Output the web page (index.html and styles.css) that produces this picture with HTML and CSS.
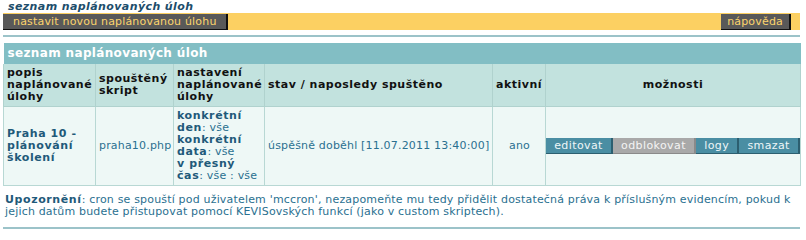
FILE: index.html
```html
<!DOCTYPE html>
<html lang="cs">
<head>
<meta charset="utf-8">
<title>seznam naplánovaných úloh</title>
<link rel="stylesheet" href="styles.css">
</head>
<body>
<h1 class="page-title">seznam naplánovaných úloh</h1>
<div class="toolbar">
  <a class="tbtn tbtn-main" href="#">nastavit novou naplánovanou úlohu</a>
  <a class="tbtn" href="#">nápověda</a>
</div>
<div class="rule rule-top"></div>
<table class="grid">
  <colgroup>
    <col class="c1"><col class="c2"><col class="c3"><col class="c4"><col class="c5"><col class="c6">
  </colgroup>
  <thead>
    <tr><th colspan="6" class="caption">seznam naplánovaných úloh</th></tr>
    <tr class="head">
      <th>popis naplánované úlohy</th>
      <th>spouštěný skript</th>
      <th>nastavení naplánované úlohy</th>
      <th>stav / naposledy spuštěno</th>
      <th>aktivní</th>
      <th class="center">možnosti</th>
    </tr>
  </thead>
  <tbody>
    <tr class="row">
      <td class="strong">Praha 10 - plánování školení</td>
      <td>praha10.php</td>
      <td><b>konkrétní den</b>: vše<br><b>konkrétní data</b>: vše<br><b>v přesný čas</b>: vše : vše</td>
      <td>úspěšně doběhl [11.07.2011 13:40:00]</td>
      <td class="center">ano</td>
      <td class="actions-cell">
        <div class="actions">
          <a class="abtn" href="#">editovat</a>
          <a class="abtn abtn-off" href="#">odblokovat</a>
          <a class="abtn" href="#">logy</a>
          <a class="abtn" href="#">smazat</a>
        </div>
      </td>
    </tr>
  </tbody>
</table>
<p class="note"><b>Upozornění</b>: cron se spouští pod uživatelem 'mccron', nezapomeňte mu tedy přidělit dostatečná práva k příslušným evidencím, pokud k jejich datům budete přistupovat pomocí KEVISovských funkcí (jako v custom skriptech).</p>
<div class="rule"></div>
</body>
</html>
```
FILE: styles.css
```css
html, body {
  margin: 0;
  padding: 0;
  background: #ffffff;
}
body {
  padding: 0 3px;
  width: 797px;
  font-family: "DejaVu Sans", Verdana, sans-serif;
  font-size: 11px;
  line-height: 12px;
  color: #2a7090;
  letter-spacing: 0.18px;
}
.page-title {
  margin: 0;
  padding: 1px 0 0 5px;
  height: 12px;
  font-size: 11px;
  line-height: 12px;
  font-weight: bold;
  font-style: italic;
  color: #1c4d6b;
  letter-spacing: 0.4px;
}
.toolbar {
  display: flex;
  justify-content: space-between;
  background: #fcd062;
  height: 17px;
  padding-right: 9px;
}
.tbtn {
  display: block;
  background: #595959;
  color: #fcd46c;
  text-decoration: none;
  padding: 1px 6px 0 6px;
  margin-top: 1px;
  height: 14px;
  line-height: 13px;
  border-right: 2px solid #111111;
  border-bottom: 1px solid #111111;
}
.tbtn-main {
  padding: 1px 9px 0 10px;
}
.rule {
  height: 2px;
  background: #9cc3c9;
}
.rule-top {
  margin-top: 5px;
  margin-bottom: 6px;
}
.grid {
  width: 797px;
  table-layout: fixed;
  border-collapse: collapse;
}
.c1 { width: 92px; }
.c2 { width: 78px; }
.c3 { width: 91px; }
.c4 { width: 228px; }
.c5 { width: 53px; }
.c6 { width: 255px; }
.caption {
  background: #82bec4;
  color: #ffffff;
  text-align: left;
  font-size: 12px;
  font-weight: bold;
  padding: 4px 4px 4px 4px;
  height: 13px;
  line-height: 13px;
  letter-spacing: 0.35px;
}
.head th {
  background: #c2e2de;
  color: #111111;
  font-weight: bold;
  text-align: left;
  vertical-align: middle;
  padding: 3px 3px 3px 3px;
  border: 1px solid #b0d2ce;
  border-top: none;
  letter-spacing: 0.5px;
}
.head th.center { text-align: center; }
.row td {
  background: #eef8f6;
  vertical-align: middle;
  padding: 3px 2px 3px 3px;
  border: 1px solid #b8d8d4;
  height: 72px;
}
.row td b,
.row td.strong,
.note b {
  color: #1f5a7a;
  font-weight: bold;
  letter-spacing: 0.6px;
}
.row td.center { text-align: center; }
.row td.actions-cell { padding: 0; }
.actions {
  display: flex;
}
.abtn {
  flex: 1 1 auto;
  display: block;
  text-align: center;
  text-decoration: none;
  background: #4a8ea3;
  color: #eef6f8;
  line-height: 15px;
  height: 15px;
  padding: 0 6px;
  border-right: 2px solid #2c5f70;
  border-bottom: 1px solid #2c5f70;
  letter-spacing: 0.4px;
}
.abtn-off {
  background: #a9a9a9;
  color: #f4f4f4;
  border-right-color: #8a8a8a;
  border-bottom-color: #8a8a8a;
}
.note {
  margin: 8px 0 9px 0;
  padding: 0 2px 0 2px;
  line-height: 12px;
}
```
